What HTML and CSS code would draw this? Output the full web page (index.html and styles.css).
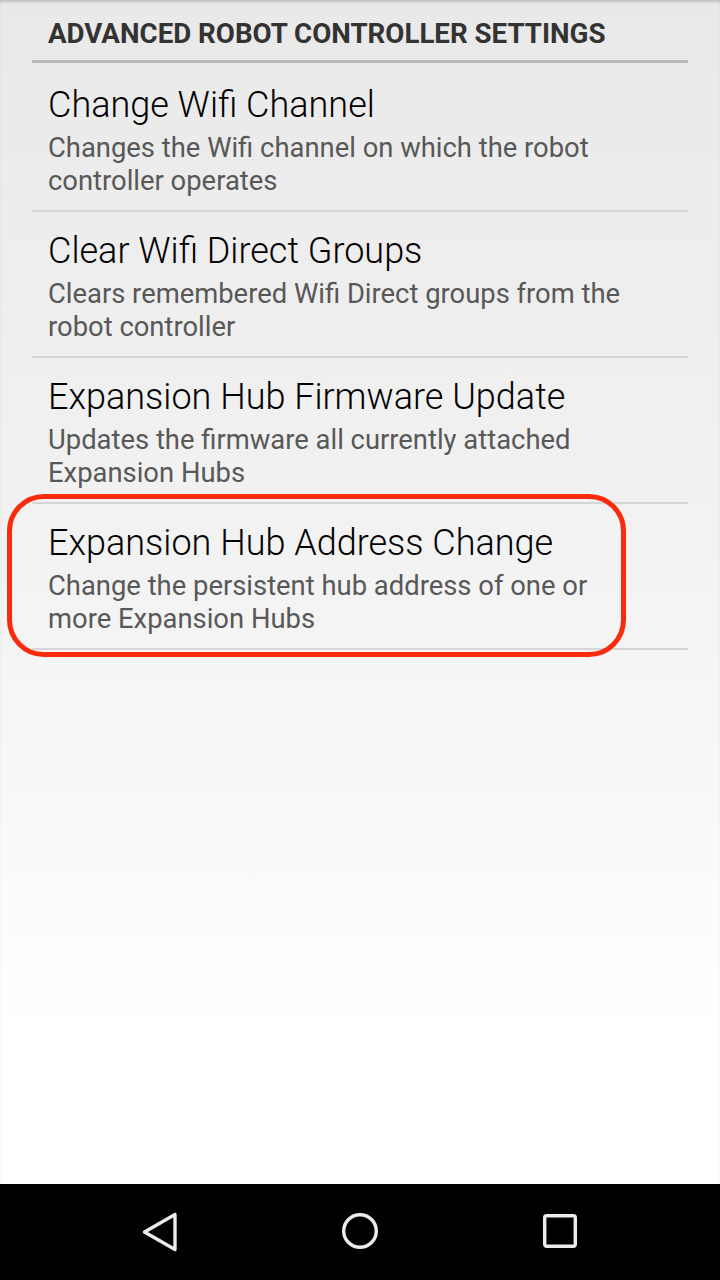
FILE: index.html
```html
<!DOCTYPE html>
<html lang="en">
<head>
<meta charset="utf-8">
<title>Advanced Robot Controller Settings</title>
<link rel="stylesheet" href="styles.css">
</head>
<body>
<div class="screen">
  <div class="content">
    <div class="category">
      <div class="category-title">ADVANCED ROBOT CONTROLLER SETTINGS</div>
    </div>
    <div class="list">
      <div class="pref">
        <div class="pref-title">Change Wifi Channel</div>
        <div class="pref-summary">Changes the Wifi channel on which the robot controller operates</div>
      </div>
      <div class="pref">
        <div class="pref-title">Clear Wifi Direct Groups</div>
        <div class="pref-summary">Clears remembered Wifi Direct groups from the robot controller</div>
      </div>
      <div class="pref">
        <div class="pref-title">Expansion Hub Firmware Update</div>
        <div class="pref-summary">Updates the firmware all currently attached Expansion Hubs</div>
      </div>
      <div class="pref highlighted">
        <div class="pref-title">Expansion Hub Address Change</div>
        <div class="pref-summary">Change the persistent hub address of one or more Expansion Hubs</div>
        <div class="highlight-ring"></div>
      </div>
    </div>
  </div>
  <nav class="navbar">
    <div class="nav-btn">
      <svg width="40" height="40" viewBox="0 0 40 40"><path d="M4.5 20 L35 2.5 L35 37.5 Z" fill="none" stroke="#ececec" stroke-width="3.4" stroke-linejoin="round"/></svg>
    </div>
    <div class="nav-btn">
      <svg width="40" height="40" viewBox="0 0 40 40"><circle cx="20" cy="19" r="16.3" fill="none" stroke="#ececec" stroke-width="3.4"/></svg>
    </div>
    <div class="nav-btn">
      <svg width="40" height="40" viewBox="0 0 40 40"><rect x="4.7" y="3.7" width="30.6" height="30.6" rx="2" fill="none" stroke="#ececec" stroke-width="3.4"/></svg>
    </div>
  </nav>
</div>
</body>
</html>
```
FILE: styles.css
```css
html, body {
  margin: 0;
  padding: 0;
}

body {
  font-family: Roboto, "Noto Sans", "Liberation Sans", sans-serif;
  width: 720px;
  height: 1280px;
  overflow: hidden;
}

.screen {
  width: 720px;
  height: 1280px;
  display: flex;
  flex-direction: column;
}

.content {
  flex: 1;
  background: linear-gradient(to bottom, #e9e9e9 0%, #f3f3f3 50%, #ffffff 88%, #ffffff 100%);
  box-shadow: inset 0 3px 3px -1px rgba(0, 0, 0, 0.18);
  padding: 0 32px;
}

.category {
  padding-top: 14px;
  border-bottom: 3px solid #bababa;
  margin-bottom: 3px;
}

.category-title {
  padding: 0 16px 6px;
  font-size: 27.7px;
  line-height: 40px;
  font-weight: 700;
  color: #333333;
}

.pref {
  position: relative;
  padding: 18px 16px 12.5px;
  border-bottom: 2px solid #d6d6d6;
}

.pref-title {
  font-size: 36px;
  line-height: 42px;
  font-weight: 300;
  color: #000000;
}

.pref-summary {
  margin-top: 5.5px;
  margin-right: 34px;
  font-size: 27.4px;
  line-height: 33px;
  color: #585858;
}

.highlight-ring {
  position: absolute;
  left: -25px;
  top: -10px;
  width: 609px;
  height: 153px;
  border: 5px solid #fb2c0e;
  border-radius: 37px;
  pointer-events: none;
}

.navbar {
  height: 96px;
  background: #000000;
  display: flex;
  justify-content: space-between;
  align-items: center;
  padding: 0 140px;
}

.nav-btn {
  width: 40px;
  height: 40px;
  display: flex;
}
```
